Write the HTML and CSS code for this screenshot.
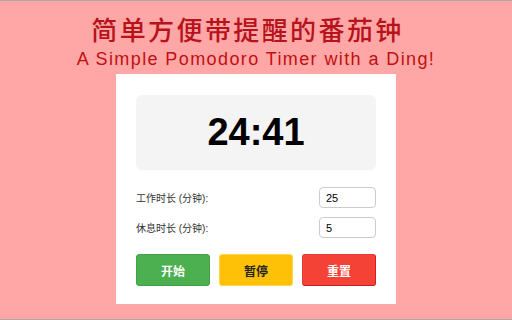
FILE: index.html
```html
<!DOCTYPE html>
<html lang="zh">
<head>
    <meta charset="UTF-8">
    <meta name="viewport" content="width=device-width, initial-scale=1.0">
    <title>番茄钟</title>
    <link rel="stylesheet" href="styles.css">
</head>
<body>
    <div class="page">
        <h1 class="title">简单方便带提醒的番茄钟</h1>
        <h2 class="subtitle">A Simple Pomodoro Timer with a Ding!</h2>

        <div class="card">
            <div class="timer" id="timer">24:41</div>

            <div class="setting">
                <label for="workTime">工作时长 (分钟):</label>
                <input type="text" id="workTime" value="25">
            </div>
            <div class="setting">
                <label for="breakTime">休息时长 (分钟):</label>
                <input type="text" id="breakTime" value="5">
            </div>

            <div class="controls">
                <button class="btn start">开始</button>
                <button class="btn pause">暂停</button>
                <button class="btn reset">重置</button>
            </div>
        </div>
    </div>
</body>
</html>
```

FILE: styles.css
```css
html, body {
    margin: 0;
    height: 100%;
}

body {
    background: #ffa7a7;
    font-family: "Liberation Sans", "Noto Sans CJK SC", sans-serif;
    box-sizing: border-box;
    border-top: 1px solid #a9a9a9;
    border-bottom: 1px solid #a9a9a9;
    overflow: hidden;
}

.page {
    display: flex;
    flex-direction: column;
    align-items: center;
}

.title {
    margin: 14px 0 0;
    padding-right: 17px;
    font-family: "Noto Sans CJK SC", sans-serif;
    font-size: 26px;
    font-weight: 500;
    letter-spacing: 2.4px;
    line-height: 28px;
    color: #b8121a;
}

.subtitle {
    margin: 6px 0 0;
    font-size: 18px;
    font-weight: normal;
    letter-spacing: 1.4px;
    line-height: 20px;
    color: #c01010;
}

.card {
    width: 280px;
    box-sizing: border-box;
    margin-top: 5px;
    padding: 21px 20px 18px;
    background: white;
}

.timer {
    height: 75px;
    display: flex;
    align-items: center;
    justify-content: center;
    background: #f4f4f4;
    border-radius: 6px;
    font-size: 38px;
    font-weight: bold;
    color: #000;
    margin-bottom: 17px;
}

.setting {
    display: flex;
    align-items: center;
    justify-content: space-between;
    height: 21px;
    margin-bottom: 9px;
    font-size: 10px;
    color: #333;
}

.setting input {
    width: 57px;
    height: 21px;
    box-sizing: border-box;
    border: 1px solid #ccc;
    border-radius: 4px;
    padding: 0 6px;
    font-family: "Liberation Sans", sans-serif;
    font-size: 11px;
    color: #000;
}

.controls {
    display: grid;
    grid-template-columns: repeat(3, 1fr);
    gap: 9px;
    margin-top: 16px;
}

.btn {
    height: 32px;
    border: 1px solid transparent;
    border-radius: 3px;
    font-family: "Noto Sans CJK SC", sans-serif;
    font-size: 12px;
    font-weight: bold;
    color: white;
    cursor: pointer;
}

.start {
    background: #4caf50;
    border-color: #43a047;
}

.pause {
    background: #ffc107;
    border-color: #ffd54f;
    color: #222;
}

.reset {
    background: #f44336;
    border-color: #e53935 #d81b1b #c91c1c #e53935;
}
```
